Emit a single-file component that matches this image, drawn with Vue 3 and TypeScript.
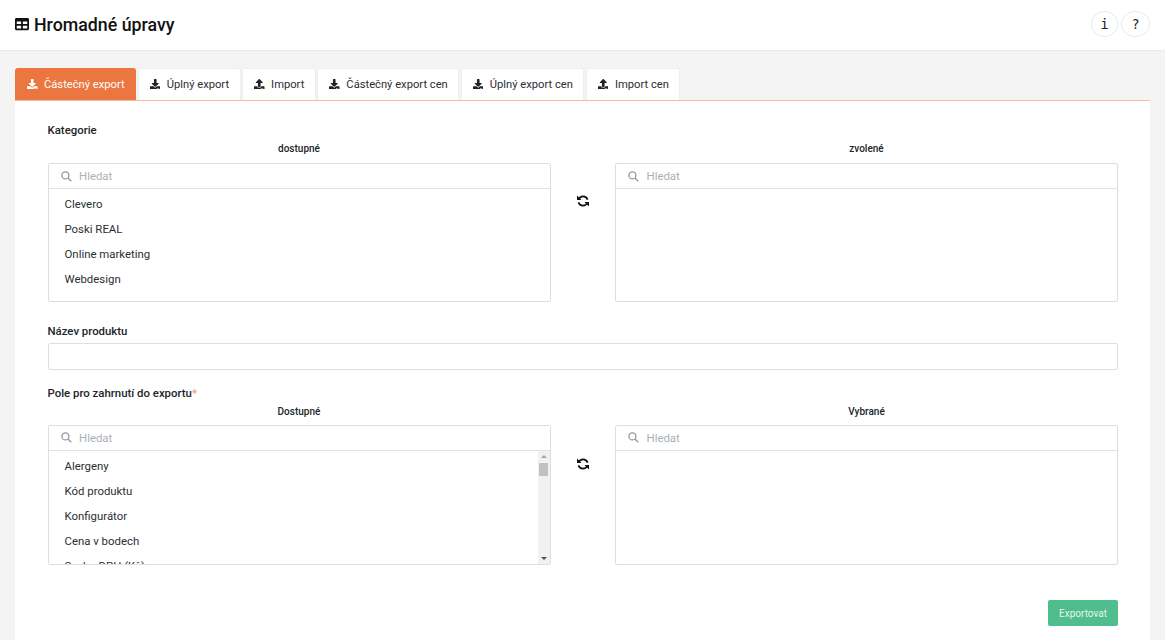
<script setup lang="ts">
const downloadPath = 'M216 0h80c13.3 0 24 10.7 24 24v168h87.7c17.8 0 26.7 21.5 14.1 34.1L269.7 378.3c-7.5 7.5-19.8 7.5-27.3 0L90.1 226.1c-12.6-12.6-3.7-34.1 14.1-34.1H192V24c0-13.3 10.7-24 24-24zm296 376v112c0 13.3-10.7 24-24 24H24c-13.3 0-24-10.7-24-24V376c0-13.3 10.7-24 24-24h146.7l49 49c20.1 20.1 52.5 20.1 72.6 0l49-49H488c13.3 0 24 10.7 24 24zm-124 88c0-11-9-20-20-20s-20 9-20 20 9 20 20 20 20-9 20-20zm64 0c0-11-9-20-20-20s-20 9-20 20 9 20 20 20 20-9 20-20z'
const uploadPath = 'M296 384h-80c-13.3 0-24-10.7-24-24V192h-87.7c-17.8 0-26.7-21.5-14.1-34.1L242.3 5.7c7.5-7.5 19.8-7.5 27.3 0l152.2 152.2c12.6 12.6 3.7 34.1-14.1 34.1H320v168c0 13.3-10.7 24-24 24zm216-8v112c0 13.3-10.7 24-24 24H24c-13.3 0-24-10.7-24-24V376c0-13.3 10.7-24 24-24h136v8c0 30.9 25.1 56 56 56h80c30.9 0 56-25.1 56-56v-8h136c13.3 0 24 10.7 24 24zm-124 88c0-11-9-20-20-20s-20 9-20 20 9 20 20 20 20-9 20-20zm64 0c0-11-9-20-20-20s-20 9-20 20 9 20 20 20 20-9 20-20z'

const tabs = [
  { label: 'Částečný export', icon: downloadPath, active: true },
  { label: 'Úplný export', icon: downloadPath, active: false },
  { label: 'Import', icon: uploadPath, active: false },
  { label: 'Částečný export cen', icon: downloadPath, active: false },
  { label: 'Úplný export cen', icon: downloadPath, active: false },
  { label: 'Import cen', icon: uploadPath, active: false },
]

const categories = ['Clevero', 'Poski REAL', 'Online marketing', 'Webdesign']
const fields = ['Alergeny', 'Kód produktu', 'Konfigurátor', 'Cena v bodech', 'Sazba DPH (Kč)']
</script>

<template>
  <div class="page">
    <header class="topbar">
      <h1 class="title">
        <svg class="title-icon" viewBox="0 0 512 512"><path d="M464 32H48C21.49 32 0 53.49 0 80v352c0 26.51 21.49 48 48 48h416c26.51 0 48-21.49 48-48V80c0-26.51-21.49-48-48-48zM224 416H64v-96h160v96zm0-160H64v-96h160v96zm224 160H288v-96h160v96zm0-160H288v-96h160v96z" /></svg>
        Hromadné úpravy
      </h1>
      <div class="round-btns">
        <button class="round-btn">i</button>
        <button class="round-btn wide">?</button>
      </div>
    </header>

    <main class="content">
      <nav class="tabs">
        <button v-for="tab in tabs" :key="tab.label" class="tab" :class="{ active: tab.active }">
          <svg class="tab-icon" viewBox="0 0 512 512"><path :d="tab.icon" /></svg>
          {{ tab.label }}
        </button>
      </nav>

      <section class="card">
        <label class="field-label">Kategorie</label>
        <div class="dual">
          <div class="dual-col">
            <div class="col-title">dostupné</div>
            <div class="box">
              <div class="search">
                <svg class="search-icon" viewBox="0 0 15 15"><circle cx="6" cy="6" r="4.8" /><path d="M9.5 9.5 14 14" /></svg>
                <span>Hledat</span>
              </div>
              <div class="box-body">
                <ul class="list">
                  <li v-for="c in categories" :key="c">{{ c }}</li>
                </ul>
              </div>
            </div>
          </div>
          <div class="swap">
            <svg class="sync-icon" viewBox="0 0 14 14"><path d="M2.6 5.5A4.8 4.8 0 0 1 11.6 5.6" /><path d="M11.4 8.5A4.8 4.8 0 0 1 2.4 8.4" /><path class="head" d="M1 1.5V6H5.5z" /><path class="head" d="M13 12.5V8H8.5z" /></svg>
          </div>
          <div class="dual-col">
            <div class="col-title">zvolené</div>
            <div class="box">
              <div class="search">
                <svg class="search-icon" viewBox="0 0 15 15"><circle cx="6" cy="6" r="4.8" /><path d="M9.5 9.5 14 14" /></svg>
                <span>Hledat</span>
              </div>
              <div class="box-body"></div>
            </div>
          </div>
        </div>

        <label class="field-label name-label">Název produktu</label>
        <div class="text-input"></div>

        <label class="field-label fields-label">Pole pro zahrnutí do exportu<span class="req">*</span></label>
        <div class="dual tall">
          <div class="dual-col">
            <div class="col-title">Dostupné</div>
            <div class="box">
              <div class="search">
                <svg class="search-icon" viewBox="0 0 15 15"><circle cx="6" cy="6" r="4.8" /><path d="M9.5 9.5 14 14" /></svg>
                <span>Hledat</span>
              </div>
              <div class="box-body">
                <ul class="list">
                  <li v-for="f in fields" :key="f">{{ f }}</li>
                </ul>
                <div class="scrollbar">
                  <span class="arrow up"></span>
                  <div class="track"><div class="thumb"></div></div>
                  <span class="arrow down"></span>
                </div>
              </div>
            </div>
          </div>
          <div class="swap">
            <svg class="sync-icon" viewBox="0 0 14 14"><path d="M2.6 5.5A4.8 4.8 0 0 1 11.6 5.6" /><path d="M11.4 8.5A4.8 4.8 0 0 1 2.4 8.4" /><path class="head" d="M1 1.5V6H5.5z" /><path class="head" d="M13 12.5V8H8.5z" /></svg>
          </div>
          <div class="dual-col">
            <div class="col-title">Vybrané</div>
            <div class="box">
              <div class="search">
                <svg class="search-icon" viewBox="0 0 15 15"><circle cx="6" cy="6" r="4.8" /><path d="M9.5 9.5 14 14" /></svg>
                <span>Hledat</span>
              </div>
              <div class="box-body"></div>
            </div>
          </div>
        </div>

        <div class="actions">
          <button class="export-btn">Exportovat</button>
        </div>
      </section>
    </main>
  </div>
</template>

<style>
html,
body {
  margin: 0;
  background: #f4f4f4;
}
</style>

<style scoped>
.page {
  height: 640px;
  overflow: hidden;
  display: flex;
  flex-direction: column;
  font-family: Roboto, sans-serif;
  color: #212529;
  background: #f4f4f4;
}

.topbar {
  height: 51px;
  box-sizing: border-box;
  flex: none;
  background: #fff;
  border-bottom: 1px solid #ebebeb;
  display: flex;
  align-items: center;
  justify-content: space-between;
  padding: 0 15px 2px;
}

.title {
  margin: 0;
  display: flex;
  align-items: center;
  gap: 5px;
  font-size: 17.8px;
  font-weight: 500;
  color: #111;
}

.title-icon {
  width: 14px;
  height: 14px;
  fill: #111;
}

.round-btns {
  display: flex;
  gap: 3px;
}

.round-btn {
  width: 27px;
  height: 26px;
  padding: 0;
  border: 1px solid #e8ebec;
  border-radius: 50%;
  background: #fff;
  font-family: "DejaVu Sans Mono", monospace;
  font-size: 13.5px;
  color: #222;
}

.round-btn.wide {
  width: 29px;
}

.content {
  flex: 1;
  display: flex;
  flex-direction: column;
  padding: 17px 15px 0;
}

.tabs {
  display: flex;
  gap: 1.5px;
  height: 32px;
  flex: none;
}

.tab {
  display: flex;
  align-items: center;
  gap: 6.5px;
  height: 32px;
  padding: 0 10.5px 1px 11px;
  border: 1px solid #eee;
  border-bottom: 0;
  border-radius: 3px 3px 0 0;
  background: #fff;
  font-family: inherit;
  font-size: 11.2px;
  color: #2b2f33;
  white-space: nowrap;
}

.tab.active {
  background: #ec7640;
  border-color: #ec7640;
  color: #fff;
}

.tab-icon {
  width: 10.5px;
  height: 10.5px;
  fill: #222;
}

.tab.active .tab-icon {
  fill: #fff;
}

.card {
  flex: 1;
  background: #fff;
  border-top: 1px solid #f8b79a;
  padding: 21px 32px 0 32.5px;
}

.field-label {
  display: block;
  font-size: 11.4px;
  font-weight: 500;
  line-height: 16px;
  color: #212529;
}

.name-label {
  margin-top: 21px;
}

.fields-label {
  margin-top: 15px;
}

.req {
  color: #f49a8a;
}

.dual {
  display: flex;
  margin-top: 4px;
}

.dual-col {
  width: 503px;
  flex: none;
}

.col-title {
  text-align: center;
  font-size: 10px;
  font-weight: 500;
  line-height: 14px;
  color: #212529;
  margin-bottom: 7px;
}

.tall .col-title {
  margin-bottom: 6px;
}

.box {
  height: 139px;
  box-sizing: border-box;
  border: 1px solid #dcdfe1;
  border-radius: 2px;
  display: flex;
  flex-direction: column;
}

.tall .box {
  height: 140px;
}

.search {
  height: 24px;
  flex: none;
  display: flex;
  align-items: center;
  gap: 7.5px;
  padding-left: 12px;
  border-bottom: 1px solid #dfe2e4;
  font-size: 11.4px;
  color: #a9b1b8;
}

.tall .search {
  height: 25px;
  box-sizing: border-box;
  padding-bottom: 1px;
}

.search-icon {
  width: 11px;
  height: 11px;
  flex: none;
  fill: none;
  stroke: #8f989f;
  stroke-width: 1.8;
}

.box-body {
  flex: 1;
  min-height: 0;
  display: flex;
  overflow: hidden;
}

.list {
  flex: 1;
  margin: 0;
  padding: 2.5px 0 0;
  list-style: none;
  overflow: hidden;
  font-size: 11.4px;
}

.tall .list {
  padding-top: 3px;
}

.list li {
  height: 25.1px;
  line-height: 25.1px;
  padding-left: 16px;
  color: #2b2f33;
}

.swap {
  width: 64.5px;
  flex: none;
  display: flex;
  justify-content: center;
  align-items: flex-start;
  padding: 52px 0 0 1px;
  box-sizing: border-box;
}

.sync-icon {
  width: 14px;
  height: 14px;
  fill: none;
  stroke: #111;
  stroke-width: 1.7;
}

.sync-icon .head {
  fill: #111;
  stroke: none;
}

.scrollbar {
  width: 12px;
  flex: none;
  background: #f1f1f1;
  display: flex;
  flex-direction: column;
  align-items: center;
}

.track {
  flex: 1;
  width: 100%;
  padding-top: 1px;
}

.thumb {
  width: 9px;
  height: 13px;
  margin: 0 auto;
  background: #c1c1c1;
}

.arrow {
  width: 0;
  height: 0;
  border-left: 3px solid transparent;
  border-right: 3px solid transparent;
  margin: 4px 0;
}

.arrow.up {
  border-bottom: 3px solid #a3a3a3;
}

.arrow.down {
  border-top: 3px solid #505050;
}

.text-input {
  height: 27px;
  box-sizing: border-box;
  margin-top: 4px;
  border: 1px solid #dcdfe1;
  border-radius: 2px;
}

.actions {
  display: flex;
  justify-content: flex-end;
  margin-top: 35px;
}

.export-btn {
  width: 70px;
  height: 26px;
  padding: 0;
  border: 0;
  border-radius: 2px;
  background: #4fbd8d;
  color: #e3f6ec;
  font-family: inherit;
  font-size: 10px;
}
</style>
